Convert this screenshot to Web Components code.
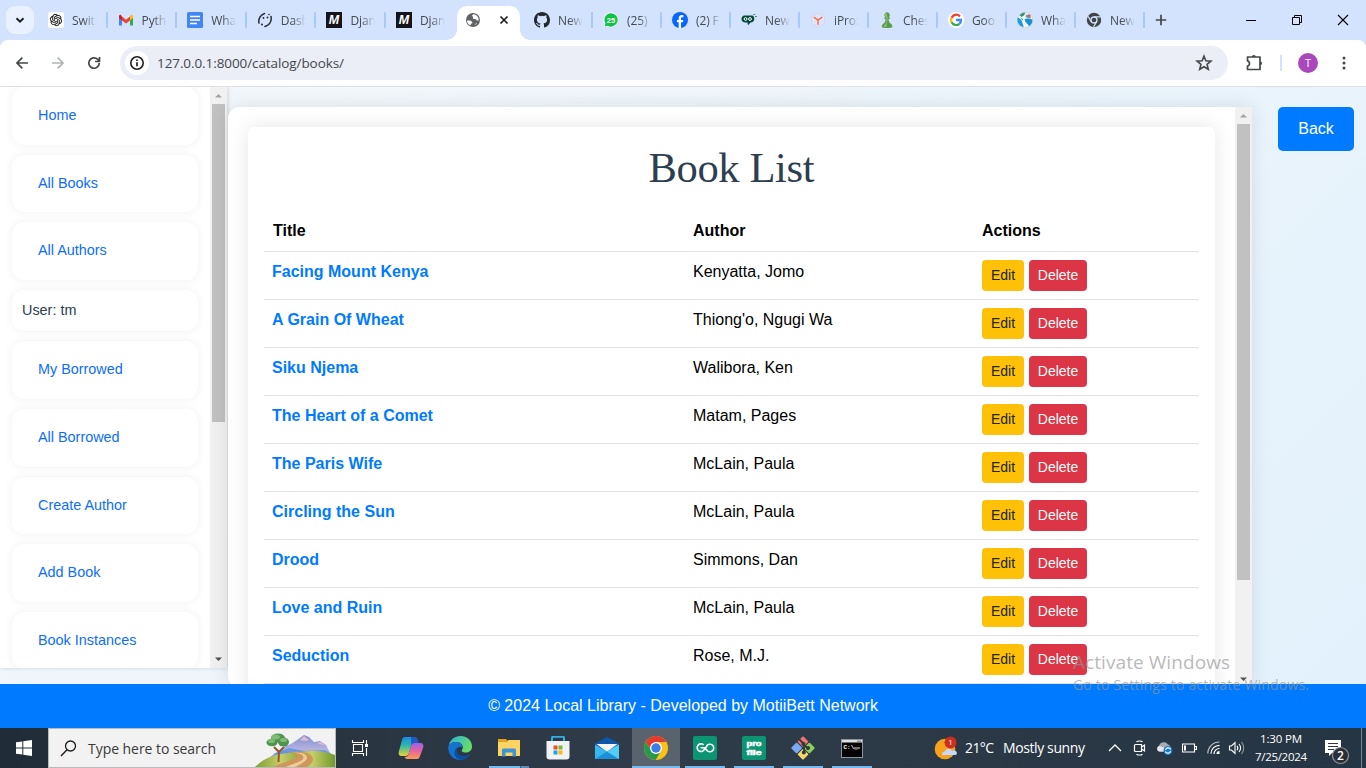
<!DOCTYPE html>
<html lang="en">
<head>
<meta charset="utf-8">
<title>Book List</title>
<style>
html,body{margin:0;padding:0;width:1366px;height:768px;overflow:hidden;font-family:"Liberation Sans",Arial,sans-serif}
</style>
</head>
<body>
<desktop-screen></desktop-screen>
<script>
const UI = '"Open Sans","Noto Sans",sans-serif';
function define(name, html, after) {
  const t = document.createElement('template');
  t.innerHTML = html;
  customElements.define(name, class extends HTMLElement {
    connectedCallback() {
      if (this.shadowRoot) return;
      this.attachShadow({mode: 'open'});
      if (after && after.before) after.before(this, t);
      this.shadowRoot.append(t.content.cloneNode(true));
    }
  });
}

/* Icon set: [width, height, markup] */
const ICONS = {
  chevdown: [16,16,'<path d="M4.5 6.2 8 9.7l3.5-3.5" fill="none" stroke="#1f1f1f" stroke-width="2"/>'],
  gpt: [16,16,'<rect width="16" height="16" rx="2.5" fill="#fff"/><g transform="translate(2 2) scale(.5)"><path fill="#111" stroke="#111" stroke-width=".3" d="M22.2819 9.8211a5.9847 5.9847 0 0 0-.5157-4.9108 6.0462 6.0462 0 0 0-6.5098-2.9A6.0651 6.0651 0 0 0 4.9807 4.1818a5.9847 5.9847 0 0 0-3.9977 2.9 6.0462 6.0462 0 0 0 .7427 7.0966 5.98 5.98 0 0 0 .511 4.9107 6.051 6.051 0 0 0 6.5146 2.9001A5.9847 5.9847 0 0 0 13.2599 24a6.0557 6.0557 0 0 0 5.7718-4.2058 5.9894 5.9894 0 0 0 3.9977-2.9001 6.0557 6.0557 0 0 0-.7475-7.0729zm-9.022 12.6081a4.4755 4.4755 0 0 1-2.8764-1.0408l.1419-.0804 4.7783-2.7582a.7948.7948 0 0 0 .3927-.6813v-6.7369l2.02 1.1686a.071.071 0 0 1 .038.052v5.5826a4.504 4.504 0 0 1-4.4945 4.4944zm-9.6607-4.1254a4.4708 4.4708 0 0 1-.5346-3.0137l.142.0852 4.783 2.7582a.7712.7712 0 0 0 .7806 0l5.8428-3.3685v2.3324a.0804.0804 0 0 1-.0332.0615L9.74 19.9502a4.4992 4.4992 0 0 1-6.1408-1.6464zM2.3408 7.8956a4.485 4.485 0 0 1 2.3655-1.9728V11.6a.7664.7664 0 0 0 .3879.6765l5.8144 3.3543-2.0201 1.1685a.0757.0757 0 0 1-.071 0l-4.8303-2.7865A4.504 4.504 0 0 1 2.3408 7.872zm16.5963 3.8558L13.1038 8.364 15.1192 7.2a.0757.0757 0 0 1 .071 0l4.8303 2.7913a4.4944 4.4944 0 0 1-.6765 8.1042v-5.6772a.79.79 0 0 0-.407-.667zm2.0107-3.0231l-.142-.0852-4.7735-2.7818a.7759.7759 0 0 0-.7854 0L9.409 9.2297V6.8974a.0662.0662 0 0 1 .0284-.0615l4.8303-2.7866a4.4992 4.4992 0 0 1 6.6802 4.66zM8.3065 12.863l-2.02-1.1638a.0804.0804 0 0 1-.038-.0567V6.0742a4.4992 4.4992 0 0 1 7.3757-3.4537l-.142.0805L8.704 5.459a.7948.7948 0 0 0-.3927.6813zm1.0976-2.3654l2.602-1.4998 2.6069 1.4998v2.9994l-2.5974 1.4997-2.6067-1.4997Z"/></g>'],
  gmail: [16,16,'<path d="M1 4v9.5h3V7z" fill="#4285f4"/><path d="M12 7v6.5h3V4z" fill="#34a853"/><path d="M1 4.3v1.8L4 8.4V4.6L2.9 3C2 2.4 1 3.200 1 4.300z" fill="#c5221f"/><path d="M4 4.600v3.800l4 3 4-3V4.600L8 7.700z" fill="#ea4335"/><path d="M12 4.600v3.800l3-2.300V4.300c0-1.200-1.200-2-2.100-1.300z" fill="#fbbc04"/>'],
  docs: [16,16,'<rect width="16" height="16" rx="1.500" fill="#4285f4"/><path d="M3 4.500h10M3 8h10M3 11.500h7" stroke="#fff" stroke-width="1.600"/>'],
  dash: [16,16,'<g fill="none" stroke="#2b2b33" stroke-width="1.500" stroke-linecap="round"><path d="M2 11c-1-4.500 2-8.500 5.500-9.500M14 4.500c1 5-2 8.500-6 10"/></g><g fill="#2b2b33"><circle cx="6.500" cy="6" r=".9"/><circle cx="10.500" cy="5.500" r=".9"/><circle cx="5" cy="12.500" r="1"/><circle cx="12" cy="2.500" r=".8"/></g>'],
  mdn: [16,16,'<rect width="16" height="16" fill="#15141a"/><text x="8" y="12.300" text-anchor="middle" font-family="Liberation Sans" font-style="italic" font-weight="bold" font-size="12.500" fill="#fff">M</text>'],
  globe: [16,16,'<circle cx="8" cy="8" r="7" fill="#5f6368"/><path d="M2 8.500c2.500-.3 4 .2 5 1.200s.2 1.800-.7 1.900 0 1.800-1.300 1.700C3 12 2 10.500 2 8.500zM8.500 2.200c-1.500.8-2 1.800-.8 2.300 1 .4-.5 1.500.5 2.200 1.800.8 3 .2 3.300 1.600l2.100.4c.6-3-1.600-6-5.100-6.500zM11.800 10.500l-2.300 2.600 2-1z" fill="#fff"/>'],
  close: [16,16,'<path d="m4.500 4.500 7 7m0-7-7 7" stroke="#1f1f1f" stroke-width="1.700"/>'],
  github: [16,16,'<path fill="#24292f" d="M8 0C3.580 0 0 3.580 0 8c0 3.540 2.290 6.530 5.470 7.590.4.070.55-.17.55-.38 0-.19-.01-.82-.01-1.490-2.010.37-2.530-.49-2.690-.94-.09-.23-.48-.94-.82-1.130-.28-.15-.68-.52-.01-.53.63-.01 1.080.58 1.230.82.72 1.210 1.870.87 2.330.66.070-.52.28-.87.51-1.070-1.780-.2-3.640-.89-3.640-3.950 0-.87.31-1.590.82-2.150-.08-.2-.36-1.020.08-2.120 0 0 .67-.21 2.200.82a7.600 7.600 0 0 1 4 0c1.530-1.040 2.200-.82 2.200-.82.44 1.100.16 1.920.08 2.120.51.56.82 1.270.82 2.150 0 3.070-1.870 3.750-3.650 3.950.29.25.54.73.54 1.480 0 1.070-.01 1.930-.01 2.200 0 .21.15.46.55.38A8.010 8.010 0 0 0 16 8c0-4.420-3.580-8-8-8z"/>'],
  whatsapp: [16,16,'<path d="M8 .3a7.500 7.500 0 1 1-3.600 14.300L.4 15.600l1.200-3.900A7.500 7.500 0 0 1 8 .3z" fill="#fff"/><path d="M8 1.200a6.700 6.700 0 1 1-3.400 12.500L1.600 14.600l.9-3.100A6.700 6.700 0 0 1 8 1.200z" fill="#12c143"/><text x="8" y="10.700" text-anchor="middle" font-family="Liberation Sans" font-weight="bold" font-size="7.500" fill="#fff">25</text>'],
  facebook: [16,16,'<circle cx="8" cy="8" r="8" fill="#0866ff"/><path d="M6.700 15.900V10.300H4.900V7.900h1.800V6.500c0-2.300 1-3.500 3.200-3.500.5 0 1.100.1 1.500.2v2.100h-.9c-1.100 0-1.500.4-1.500 1.500v1.100h2.300l-.4 2.400H9v5.600z" fill="#fff"/>'],
  quill: [16,16,'<path d="M3 3.500h8.500c1.200.6 1.800 1.800 1.800 3.200 0 2.300-1.500 3.800-3.800 3.900L7 13.200l-.6-2.600H4.500C2 10.500.5 9 .5 7c0-1.600 1-3 2.500-3.500z" fill="#04493a"/><circle cx="4.600" cy="7" r="1.400" fill="none" stroke="#fff" stroke-width="1"/><circle cx="9" cy="7" r="1.400" fill="none" stroke="#fff" stroke-width="1"/><path d="M12.500 2.500h1.800M14 4.500h2" stroke="#4b8375" stroke-width="1"/>'],
  ipro: [16,16,'<path d="m8 .8 6.500 3.700v7.200L8 15.300l-6.500-3.600V4.500z" fill="#dfe5f8" stroke="#cfd3ec" stroke-width=".8"/><path d="m3.800 5.200 4.200 3 4.200-3M8 8.200v4.600" fill="none" stroke="#fb6a4f" stroke-width="1.500"/>'],
  chess: [16,16,'<path d="M8 .3a2.900 2.900 0 0 1 1.900 5l1.700 1.200-2 .5c.1 2.500.7 3.700 2.600 5 1 .8 1.200 1.800 1.200 3.300-2.500 1-8.100 1-10.600 0 0-1.500.2-2.500 1.200-3.300 1.900-1.300 2.500-2.500 2.600-5l-2-.5 1.700-1.200A2.900 2.900 0 0 1 8 .3z" fill="#5d9948"/><path d="M7.500 1a2 2 0 0 0-.9 3.600L7.600 7l-.3 4-3 3.500c1 .4 2 .5 3 .6L8.600 8l-.1-3z" fill="#8ac36a"/>'],
  google: [16,16,'<circle cx="8" cy="8" r="8" fill="#fff"/><g fill="none" stroke-width="2.300"><path d="M12 4.400A5 5 0 0 0 3.600 5.800" stroke="#ea4335"/><path d="M3.600 5.700a5 5 0 0 0 0 4.700" stroke="#fbbc05"/><path d="M3.600 10.300a5 5 0 0 0 7.800 1.500" stroke="#34a853"/><path d="M8 8h5a5 5 0 0 1-1.700 3.900" stroke="#4285f4"/></g>'],
  world: [16,16,'<circle cx="8" cy="8" r="7.800" fill="#f2f7f5" stroke="#a9c3b4" stroke-width=".5"/><path d="M.8 5.500C2 6 4.500 7.500 5 9.500S6.500 13 6.500 15.200A7.500 7.500 0 0 1 .8 5.500z" fill="#1d9bd6"/><path d="M2.500 3.200C4.500 1 6.500.6 8.500.8L7 3.500 4.500 5z" fill="#3a8f7a"/><path d="M7.500 7.500c2-1.500 4.500-1 7.800 0 .3 3-1 5.500-3.300 6.800-1-2.500-4-3.800-4.500-6.800z" fill="#1991cc"/><path d="M9 2.500c2 0 4.500 1.500 5.300 3.500L11 6.500 8.500 5z" fill="#79a4c9"/><path d="M3 5.500 6 7l-.5 1.500z" fill="#47a860"/><circle cx="12" cy="3.800" r="1.500" fill="#d8574f"/>'],
  chromegray: [16,16,'<circle cx="8" cy="8" r="7.200" fill="#414549"/><circle cx="8" cy="8" r="3" fill="#414549" stroke="#d3e3fd" stroke-width="1.300"/><path d="M8 4.900h6.500M5.300 9.600 2 4.200M10.700 9.600 7.500 15" stroke="#d3e3fd" stroke-width="1.200"/>'],
  plus: [16,16,'<path d="M8 2.800v10.400M2.800 8h10.400" stroke="#444746" stroke-width="1.700"/>'],
  min: [16,16,'<path d="M3 8.500h10" stroke="#000"/>'],
  restore: [16,16,'<path d="M3.500 5.500h7v7h-7zM5.500 5.500v-2h7v7h-2" fill="none" stroke="#000"/>'],
  winclose: [16,16,'<path d="m3 3 10 10M13 3 3 13" stroke="#000" stroke-width="1.100"/>'],
  back: [16,16,'<path d="M14 8H3M8.300 2.700 3 8l5.300 5.300" fill="none" stroke="#444746" stroke-width="1.700"/>'],
  fwd: [16,16,'<path d="M2 8h11M7.700 2.700 13 8l-5.300 5.300" fill="none" stroke="#b1b3b5" stroke-width="1.700"/>'],
  reload: [16,16,'<path d="M13.200 8A5.200 5.200 0 1 1 11.500 4.200L13.200 6M13.500 2v4.500H9" fill="none" stroke="#444746" stroke-width="1.700"/>'],
  info: [16,16,'<circle cx="8" cy="8" r="6.200" fill="none" stroke="#1f1f1f" stroke-width="1.600"/><path d="M8 7.300v4M8 4.500v1.600" stroke="#1f1f1f" stroke-width="1.700"/>'],
  star: [18,18,'<path d="m9 2.200 1.900 4.600 5 .4-3.800 3.200 1.200 4.900L9 12.700l-4.300 2.600 1.200-4.900-3.800-3.200 5-.4z" fill="none" stroke="#444746" stroke-width="1.600"/>'],
  ext: [18,18,'<path d="M2.500 3h12.500v12.500H2.500v-3.500c2.600-.4 2.600-4.600 0-5z" fill="none" stroke="#444746" stroke-width="1.700" stroke-linejoin="round"/><path d="M6.800 3a2 2 0 0 1 4 0zM15 7.300a2 2 0 0 1 0 4z" fill="#444746"/>'],
  dots: [16,16,'<g fill="#444746"><circle cx="8" cy="3" r="1.500"/><circle cx="8" cy="8" r="1.500"/><circle cx="8" cy="13" r="1.500"/></g>'],
  up: [17,17,'<path d="M5 10.500h7L8.500 7z" fill="#a3a3a3"/>'],
  down: [17,17,'<path d="M5 6.500h7L8.500 10z" fill="#505050"/>'],
  windows: [16,16,'<path d="M0 2.300 6.300 1.400v6.100H0zM7.300 1.300 16 0v7.500H7.300zM0 8.500h6.300v6.100L0 13.700zM7.300 8.500H16V16l-8.700-1.300z" fill="#fff"/>'],
  search: [17,17,'<circle cx="10.500" cy="6" r="5" fill="none" stroke="#1b1b1b" stroke-width="1.300"/><path d="m7 9.700-6 6.300" stroke="#1b1b1b" stroke-width="1.400"/>'],
  scene: [80,38,'<defs><linearGradient id="g" x2="1" y2="0"><stop stop-color="#7f9e35"/><stop offset=".5" stop-color="#c8ce68"/><stop offset="1" stop-color="#6f9a2c"/></linearGradient><linearGradient id="m" x2="0" y2="1"><stop stop-color="#7f8fd3"/><stop offset=".6" stop-color="#b9b2e0"/><stop offset="1" stop-color="#4287dd"/></linearGradient></defs><path d="M14 29 30 17l6-2 6-4 7-5 5 2 5 5 6-1 6 4 3 6 2 5v4z" fill="url(#m)"/><path d="m45 11 4-4 5 4-4 1zM62 14l4-1 4 4z" fill="#e0b9cf"/><path d="M18 25 34 19l16 3 20-1 8 5v4z" fill="#4a8fe6" opacity=".7"/><path d="M38 25c12-5 30-4 42 1v12H34z" fill="url(#g)"/><path d="M0 38C8 30 18 25 34 24s18 14 18 14z" fill="url(#g)"/><path d="M32 23c12-1 25 0 26 7 0 4-4 6-6 8H18c10-5 22-7 24-11 .4-3-6-3-10-4z" fill="#cf9659"/><path d="M38 24c8 0 12 3 10 6-2 3-12 5-17 8h9c6-3 12-6 12-9 0-5-7-6-14-5z" fill="#efcb98"/><path d="M23.500 33 24 23l-5-5M24 23l5-5" stroke="#99552b" stroke-width="2" fill="none"/><g fill="#4f9450"><ellipse cx="17" cy="13.500" rx="5.500" ry="3.800"/><ellipse cx="23" cy="9" rx="7" ry="4.500"/><ellipse cx="28.500" cy="13" rx="5.500" ry="4.500"/></g><g fill="#80bb77"><ellipse cx="20.500" cy="8" rx="4.500" ry="2.500"/><ellipse cx="16.500" cy="12" rx="3.500" ry="2"/><ellipse cx="28.500" cy="11" rx="3.500" ry="2"/></g>'],
  taskview: [18,18,'<path d="M2.500 5.500h9v7h-9zM1.500 1v2.500h11V1M1.500 17v-2.500h11V17M15.500 1v4M15.500 9v8" fill="none" stroke="#fff" stroke-width="1.100"/><rect x="14" y="5" width="3" height="3" fill="#fff"/>'],
  copilot: [26,26,'<defs><linearGradient id="l" x2="0" y2="1"><stop stop-color="#178be9"/><stop offset=".45" stop-color="#2eb8a6"/><stop offset="1" stop-color="#e8d13a"/></linearGradient><linearGradient id="r" x2="0" y2="1"><stop stop-color="#9b5ff0"/><stop offset=".5" stop-color="#e9639d"/><stop offset="1" stop-color="#fa9d55"/></linearGradient></defs><path d="M7 2h9c2 0 3 1 3.500 3l1 3h-4c-2 0-3 1-3.500 3l-2 7c-.6 2-1.600 3-3.600 3H4c-3 0-4-2-3-5L4 5c.6-2 1.400-3 3-3z" fill="url(#l)"/><path d="M19 24h-9c-2 0-3-.5-3.300-2 2.600 0 3.600-1.500 4.300-4l2-7c.6-2 1.600-3 3.600-3H22c3 0 4 2 3 5l-3 8c-.6 2-1.400 3-3 3z" fill="url(#r)"/><path d="M13 2h3c2 0 3 1 3.500 3l1 3h-4c-2 0-2.600.5-3.300 2z" fill="#2357c5"/>'],
  edge: [24,24,'<defs><linearGradient id="e" x2="1" y2=".5"><stop stop-color="#2ab1ea"/><stop offset="1" stop-color="#66dd66"/></linearGradient></defs><path d="M.5 10C2 3.500 7 0 12.500 0 19 0 24 4.500 24 10.500c0 4-3 6-6.500 6-3 0-4.500-1.200-3.500-2.500 2.500-4-1-8-5.500-8S1.500 8 .5 10z" fill="url(#e)"/><path d="M.3 10.500C2 6.800 6 5.500 9 6c3.500.5 5.500 3 5.700 5.500C12 9.500 8 11.500 8 15.500c0 5 4 8.500 9 7.500C8 26.500-.8 19.500.3 10.500z" fill="#1573cf"/><path d="M9.500 11.500C7 16 11 20 15.500 20c3 0 5-1 7-2.500-1.500 3.500-5.500 6.300-9.500 6.500-6.500-1-9-9.500-3.500-12.500z" fill="#0c4f9f"/>'],
  explorer: [22,20,'<path d="M0 1h8l2 2h12v4H0z" fill="#e3a21a"/><path d="M0 4h9l1.500-2H22v16H0z" fill="#fcd462"/><path d="M4 18.500V12c0-1 .7-1.500 1.500-1.500h11c.8 0 1.500.5 1.500 1.500v6.500h-3.500v-4h-7v4z" fill="#3d94da"/>'],
  store: [24,24,'<path d="M6 6V1.800C6 1 6.500.7 7 .7h10c.6 0 1 .3 1 1.100V6" fill="none" stroke="#2eb0e7" stroke-width="2"/><path d="M.5 5h23v15.500c0 2-1 3-3 3h-17c-2 0-3-1-3-3z" fill="#f1f2f3"/><path d="M7.500 9.500h4v4h-4z" fill="#e8532a"/><path d="M12.500 9.500h4v4h-4z" fill="#7cb82f"/><path d="M7.500 14.500h4v4h-4z" fill="#23a3e3"/><path d="M12.500 14.500h4v4h-4z" fill="#f9b81b"/>'],
  mail: [24,22,'<path d="M0 6.500 12 0l12 6.500v4H0z" fill="#0c59a9"/><path d="M1.500 7h21L12 15z" fill="#f4f4f4"/><path d="M0 7.500 12 14.500 24 7.500V22H0z" fill="#35b8f1"/><path d="M0 22 12 14.500 24 22z" fill="#1d8fd9"/><path d="M12 14.500 24 7.500V22z" fill="#54cdf7"/>'],
  chrome: [24,24,'<circle cx="12" cy="12" r="12" fill="#fbc116"/><path d="M1.600 6A12 12 0 0 1 22.400 6H12L6.500 13z" fill="#e33b2e"/><path d="M1.600 6a12 12 0 0 0 10 18L17 15l-9.500-.5z" fill="#249a4a"/><circle cx="12" cy="12" r="6" fill="#fff"/><circle cx="12" cy="12" r="4.700" fill="#3b7dec"/>'],
  go: [24,24,'<rect width="24" height="24" rx="2" fill="#0b9573"/><path d="M10.500 8.800a3.800 3.800 0 1 0 1 4.200v-1.200H7.500M11.500 13.500 14.500 9A3.800 3.800 0 1 1 14 14.500l-1.500-2" fill="none" stroke="#fff" stroke-width="1.600"/>'],
  profile: [24,24,'<rect width="24" height="24" rx="2" fill="#0b9573"/><g font-family="Liberation Sans" font-weight="bold" font-size="7.800" fill="#fff" stroke="#fff" stroke-width=".6"><text x="4.500" y="9.700" textLength="15" lengthAdjust="spacingAndGlyphs">pro</text><text x="4.500" y="18.700" textLength="15" lengthAdjust="spacingAndGlyphs">file</text></g>'],
  git: [24,24,'<g transform="rotate(45 12 12)"><rect x="3.500" y="3.500" width="8" height="8" rx="1" fill="#f07575"/><rect x="12.500" y="3.500" width="8" height="8" rx="1" fill="#8ad158"/><rect x="3.500" y="12.500" width="8" height="8" rx="1" fill="#79a9f3"/><rect x="12.500" y="12.500" width="8" height="8" rx="1" fill="#f8d96b"/></g><path d="m8 3 5 5v10M13 9l4.500 4" stroke="#33383d" stroke-width="1.800" fill="none"/><circle cx="12.500" cy="8" r="2" fill="#33383d"/><circle cx="12.800" cy="16.500" r="2" fill="#33383d"/><circle cx="17" cy="12" r="2" fill="#33383d"/>'],
  cmd: [22,19,'<rect x=".5" y=".5" width="21" height="18" fill="#050505" stroke="#8e969b"/><path d="M1 1h20v2.500H1z" fill="#dfe3e6"/><path d="M16 2.200h4" stroke="#69727c"/><text x="2.500" y="10" font-family="Liberation Mono" font-size="6" font-weight="bold" fill="#fff">C:\\_</text><path d="M13 9h6" stroke="#ddd"/>'],
  weather: [24,24,'<circle cx="11" cy="13" r="10.300" fill="#f6a21c"/><path d="M8 18.500a3 3 0 0 1 2.800-3 4 4 0 0 1 7.400-.5 2.800 2.800 0 0 1 4.300 3.500 1.800 1.800 0 0 1-1 .5h-12c-1 0-1.500 0-1.500-.5z" fill="#c4d9fa"/><circle cx="16.500" cy="6.500" r="6" fill="#cf2d20"/><text x="16.500" y="9.300" text-anchor="middle" font-family="Open Sans" font-size="8" fill="#fff">1</text>'],
  caret: [14,8,'<path d="m1 7 6-6 6 6" fill="none" stroke="#fff" stroke-width="1.300"/>'],
  meet: [14,16,'<path d="M2.500 4.500h6v7h-6c-.7 0-1-.4-1-1v-5c0-.6.3-1 1-1zM8.500 7l3-2v6l-3-2M3.500 1.800C5 .8 8 .8 9.500 1.800M3.500 14.200c1.500 1 4.500 1 6 0" fill="none" stroke="#fff" stroke-width="1.200"/>'],
  cloud: [17,14,'<path d="M3 10.500a3 3 0 0 1 0-5.500 5 5 0 0 1 9-1.500c2 .5 2.500 2 2.500 3.500L12 11z" fill="#a9adb1"/><path d="M3 10.500a3 3 0 0 1 0-5.500l5 1.500 2 4z" fill="#e7e8e9"/><circle cx="12" cy="9.500" r="4.500" fill="#1878c9"/><path d="M9.500 9a2.600 2.600 0 0 1 4.500-1.300v-1M14.500 10a2.600 2.600 0 0 1-4.500 1.300v1" fill="none" stroke="#fff" stroke-width="1.200"/>'],
  battery: [16,10,'<path d="M1.500 1h12v8h-12zM14 3.500h1.500v3H14" fill="none" stroke="#fff" stroke-width="1.100"/><path d="M3 2.500h2v5H3z" fill="#fff"/>'],
  wifi: [14,14,'<g fill="none" stroke="#fff" stroke-width="1.200"><path d="M.8 12.500C.8 6 6 1 12.500 1" opacity=".7"/><path d="M4 12.800c0-5 4-8.500 8.500-8.500"/><path d="M7 13c0-3 2.500-5.500 5.500-5.500"/></g><path d="M9.500 13a3 3 0 0 1 3-3v3z" fill="#fff"/>'],
  sound: [17,14,'<path d="M1.500 5h2l3.500-3.500v11L3.500 9h-2z" fill="none" stroke="#fff" stroke-width="1.100"/><path d="M9 4.800c1 1.300 1 3 0 4.400M11 3c2 2.500 2 5.500 0 8" fill="none" stroke="#fff" stroke-width="1.100"/><path d="M13.500 1c3 4 3 8 0 12" fill="none" stroke="#8f979e" stroke-width="1.100"/>'],
  notice: [26,26,'<path d="M1 1h16v13H8l-3 3v-3H1z" fill="#fff"/><path d="M4 4.500h10M4 7.500h10M4 10.500h6" stroke="#2b3947"/><circle cx="16.500" cy="16.500" r="8" fill="#2b2f33" stroke="#8d959c" stroke-width="1.200"/><text x="16.500" y="21" text-anchor="middle" font-family="Open Sans" font-weight="600" font-size="12" fill="#fff">2</text>']
};
customElements.define('ui-icon', class extends HTMLElement {
  connectedCallback() {
    if (this.shadowRoot) return;
    const [w, h, body] = ICONS[this.getAttribute('name')];
    this.attachShadow({mode: 'open'}).innerHTML =
      `<style>:host{display:block;flex:none;width:${w}px;height:${h}px}svg{display:block}</style><svg width="${w}" height="${h}" viewBox="0 0 ${w} ${h}">${body}</svg>`;
  }
});

/* A single line of text tracked to a given width (attribute w). */
customElements.define('fit-text', class extends HTMLElement {
  connectedCallback() {
    if (this.shadowRoot) return;
    const w = +this.getAttribute('w');
    this.attachShadow({mode: 'open'}).innerHTML =
      `<style>:host{display:block;flex:none;width:${w}px}span{display:inline-block;white-space:nowrap}</style><span><slot></slot></span>`;
    const s = this.shadowRoot.querySelector('span');
    const n = this.textContent.length;
    const d = (w - s.getBoundingClientRect().width) / Math.max(1, n - 1);
    s.style.letterSpacing = d.toFixed(3) + 'px';
  }
});

/* ---------- browser chrome ---------- */
define('browser-tab', `<style>
:host{display:flex;align-items:center;height:40px;flex:none;width:var(--tab,69px);font:12px ${UI};color:#45494e}
ui-icon{margin:0 8px 0 10px}
.t{width:25px;overflow:hidden;white-space:nowrap;line-height:18px;padding-top:1px;-webkit-mask:linear-gradient(90deg,#000 45%,transparent);mask:linear-gradient(90deg,#000 45%,transparent);letter-spacing:-.1px}
i{width:2px;height:16px;background:#a8c7fa;margin-left:auto;border-radius:1px}
</style><ui-icon></ui-icon><div class="t"><slot></slot></div><i></i>`, {before(host, t) {
  t.content.querySelector('ui-icon').setAttribute('name', host.getAttribute('icon'));
  t.content.querySelector('i').style.visibility = host.hasAttribute('last') ? 'hidden' : '';
}});

define('tab-strip', `<style>
:host{display:flex;height:40px;background:#d3e3fd;align-items:center}
.s{width:28px;height:28px;margin:0 4px 0 6px;border-radius:9px;background:#eaf1fe;display:grid;place-items:center}
.l{display:flex;--tab:69.600px}
.a{position:relative;margin:6px 4px 0 1.400px;width:63px;height:34px;background:#fff;border-radius:10px 10px 0 0;display:flex;align-items:center;flex:none}
.a:before,.a:after{content:"";position:absolute;bottom:0;width:10px;height:10px}
.a:before{left:-10px;background:radial-gradient(circle at 0 0,transparent 9.500px,#fff 10px)}
.a:after{right:-10px;background:radial-gradient(circle at 100% 0,transparent 9.500px,#fff 10px)}
.a ui-icon:first-child{margin:-6px 15px 0 8px}.a ui-icon:last-child{margin-top:-6px}
.r{display:flex;position:relative}
.p{margin-left:8px}
.w{margin-left:auto;display:flex;gap:30px;padding-right:15px}
</style>
<div class="s"><ui-icon name="chevdown"></ui-icon></div>
<div class="l"><browser-tab icon="gpt">Swit:</browser-tab><browser-tab icon="gmail">Pyth</browser-tab><browser-tab icon="docs">Wha</browser-tab><browser-tab icon="dash">Dash</browser-tab><browser-tab icon="mdn">Djan</browser-tab><browser-tab icon="mdn" last>Djan</browser-tab></div>
<div class="a"><ui-icon name="globe"></ui-icon><ui-icon name="close"></ui-icon></div>
<div class="r"><browser-tab icon="github">New</browser-tab><browser-tab icon="whatsapp">(25)</browser-tab><browser-tab icon="facebook">(2) F</browser-tab><browser-tab icon="quill">New</browser-tab><browser-tab icon="ipro">iPro:</browser-tab><browser-tab icon="chess">Ches</browser-tab><browser-tab icon="google">Goo</browser-tab><browser-tab icon="world">Wha</browser-tab><browser-tab icon="chromegray">New</browser-tab></div>
<ui-icon class="p" name="plus"></ui-icon>
<div class="w"><ui-icon name="min"></ui-icon><ui-icon name="restore"></ui-icon><ui-icon name="winclose"></ui-icon></div>`);

define('address-bar', `<style>
:host{display:block;height:46px;background:#d3e3fd;border-bottom:1px solid #dfe1e3}
.bar{height:46px;background:#fff;border-radius:8px 8px 0 0;display:flex;align-items:center;box-sizing:border-box;padding-left:14px}
.bar>ui-icon{margin-right:20px}
.bar>ui-icon:last-child{margin-right:0}
.o{width:1108px;flex:none;height:34px;border-radius:17px;background:#ebeef7;display:flex;align-items:center;box-sizing:border-box;padding:0 15px 0 5px;margin-left:-2px}
.c{width:24px;height:24px;border-radius:50%;background:#fff;display:grid;place-items:center;margin-right:8px}
.o fit-text{font:13.500px/20px ${UI};color:#44474b}
.o>ui-icon{margin-left:auto}
.bar>ui-icon.e{margin:0 17px 0 17px}
i{width:2px;height:16px;background:#d3e3fd;flex:none}
b{width:20px;height:20px;border-radius:50%;background:#ab47bc;color:#fff;font:11px/20px ${UI};text-align:center;margin:0 18px 0 16px;flex:none}
</style><div class="bar"><ui-icon name="back"></ui-icon><ui-icon name="fwd"></ui-icon><ui-icon name="reload"></ui-icon>
<div class="o"><div class="c"><ui-icon name="info"></ui-icon></div><fit-text w="187">127.0.0.1:8000/catalog/books/</fit-text><ui-icon name="star"></ui-icon></div>
<ui-icon class="e" name="ext"></ui-icon><i></i><b>T</b><ui-icon name="dots"></ui-icon></div>`);

/* ---------- web page ---------- */
define('scroll-bar', `<style>
:host{display:flex;flex-direction:column;width:17px;flex:none;background:#f1f1f1}
div{background:#c1c1c1;margin:0 2px;height:var(--thumb)}
ui-icon:last-child{margin-top:auto}
</style><ui-icon name="up"></ui-icon><div></div><ui-icon name="down"></ui-icon>`);

define('side-link', `<style>
:host{display:block;box-sizing:border-box;flex:none;height:57.600px;padding:0 26px;background:#fff;border-radius:12px;box-shadow:0 0 10px rgba(0,0,0,.06);font-size:14.400px;line-height:57px;color:#0d6efd}
:host([plain]){height:41.600px;line-height:41px;padding:0 10px;color:#2c3e50}
</style><slot></slot>`);

define('side-nav', `<style>
:host{display:flex;width:227px;height:581px;flex:none;background:#fff;overflow:hidden}
nav{flex:1;display:flex;flex-direction:column;gap:10px;padding:0 12px;overflow:hidden}
scroll-bar{--thumb:318px;height:581px}
</style><nav><side-link>Home</side-link><side-link>All Books</side-link><side-link>All Authors</side-link><side-link plain>User: tm</side-link><side-link>My Borrowed</side-link><side-link>All Borrowed</side-link><side-link>Create Author</side-link><side-link>Add Book</side-link><side-link>Book Instances</side-link></nav><scroll-bar></scroll-bar>`);

define('book-row', `<style>
:host{display:grid;grid-template-columns:421px 289px 1fr;box-sizing:border-box;height:48px;padding:8px 8px 0;border-bottom:1px solid #dee2e6;font-size:16px;line-height:23px;color:#000}
::slotted([slot=title]){font-weight:bold;color:#007bff}
.b{display:flex;gap:5px}
button{all:unset;box-sizing:border-box;height:31px;border-radius:4px;font-size:14px;line-height:31px;text-align:center}
.e{width:42px;background:#ffc107;color:#212529}.d{width:58px;background:#dc3545;color:#fff}
</style><slot name="title"></slot><slot name="author"></slot><div class="b"><button class="e">Edit</button><button class="d">Delete</button></div>`);

const BOOKS = [['Facing Mount Kenya','Kenyatta, Jomo'],["A Grain Of Wheat","Thiong'o, Ngugi Wa"],['Siku Njema','Walibora, Ken'],['The Heart of a Comet','Matam, Pages'],['The Paris Wife','McLain, Paula'],['Circling the Sun','McLain, Paula'],['Drood','Simmons, Dan'],['Love and Ruin','McLain, Paula'],['Seduction','Rose, M.J.']];

define('book-list', `<style>
:host{display:block;box-sizing:border-box;width:967px;height:700px;background:#fff;border-radius:6px;box-shadow:0 0 20px rgba(0,0,0,.1);padding:0 16px}
h1{margin:0;height:83px;padding-top:16px;box-sizing:border-box;display:flex;justify-content:center;font:400 42.500px/50px "Liberation Serif",serif;color:#2c3e50}
.h{display:grid;grid-template-columns:421px 289px 1fr;box-sizing:border-box;height:42px;padding:0 8px;font-weight:bold;font-size:16px;line-height:41px;border-bottom:1px solid #dee2e6;color:#000}
.h span:first-child{padding-left:1px}
</style><h1><fit-text w="166">Book List</fit-text></h1>
<div class="h"><span>Title</span><span>Author</span><span>Actions</span></div>
${BOOKS.map(([t, a]) => `<book-row><span slot="title">${t}</span><span slot="author">${a}</span></book-row>`).join('')}`);

define('library-page', `<style>
:host{display:flex;flex-direction:column;height:641px;overflow:hidden;background:linear-gradient(135deg,#f5f8fb,#e2f1fc)}
.row{display:flex;height:597px;overflow:hidden;align-items:flex-start}
side-nav{box-shadow:1px 0 4px rgba(0,0,0,.15)}
main{position:relative;display:flex;width:1024px;height:581px;margin:20px 0 0 1px;flex:none;border-radius:12px 0 0 12px;box-shadow:0 0 20px rgba(0,0,0,.1)}
.in{display:flex;width:1024px;height:581px;background:#fff;border-radius:inherit;overflow:hidden}
.pad{flex:1;padding:20px;height:560px}
scroll-bar{--thumb:456px;height:581px}
a{margin:20px 0 0 26px;width:76px;height:44px;border-radius:5px;background:#007bff;color:#fff;font-size:16px;line-height:43px;text-align:center}
footer{height:44px;background:#007bff;color:#fff;font-size:16px;line-height:43px;text-align:center;position:relative}
</style><div class="row"><side-nav></side-nav><main><div class="in"><div class="pad"><book-list></book-list></div><scroll-bar></scroll-bar></div></main><a>Back</a></div>
<footer>© 2024 Local Library - Developed by MotiiBett Network</footer>`);

/* ---------- taskbar ---------- */
define('task-app', `<style>
:host{display:grid;place-items:center;width:48px;height:40px;flex:none;position:relative;margin-right:1px}
:host([open]):after{content:"";position:absolute;left:4px;right:4px;bottom:0;height:2px;background:#76b9ed}
:host([active]){background:#59636e}:host([active]):after{left:0;right:0}
:host([multi]):after{background:linear-gradient(90deg,#76b9ed 31px,#3d5a74 31px,#3d5a74 32px,#5b8db8 32px)}
</style><slot></slot>`);

define('task-bar', `<style>
:host{display:flex;height:40px;align-items:center;background:linear-gradient(90deg,#202d38,#2f3b48 45%,#2b3947 70%,#263543);color:#fff;font-family:${UI}}
.st{width:48px;display:grid;place-items:center}
.se{width:288px;height:40px;box-sizing:border-box;background:#f2f2f2;border:1px solid #b8babc;display:flex;align-items:center;padding-left:11px;color:#3a3a3a}
.se fit-text{margin-left:11px;font-size:14px;line-height:20px;padding-top:1px}
.se ui-icon:last-child{margin-left:auto}
.apps{display:flex}
.tr{display:flex;align-items:center;margin-left:auto;height:40px}
.tr fit-text{font-size:14px;line-height:20px}
.ck fit-text{font-size:11.500px;line-height:18px}
.ck{width:52px;display:flex;flex-direction:column;align-items:center;margin:2px 18px 0 10px;height:38px}
.ln{width:1px;height:40px;background:#7b858e;margin:0 4px 0 10px}
</style><div class="st"><ui-icon name="windows"></ui-icon></div>
<div class="se"><ui-icon name="search"></ui-icon><fit-text w="128">Type here to search</fit-text><ui-icon name="scene"></ui-icon></div>
<div class="apps"><task-app><ui-icon name="taskview"></ui-icon></task-app><task-app style="margin-left:2px"><ui-icon name="copilot"></ui-icon></task-app><task-app><ui-icon name="edge"></ui-icon></task-app><task-app open multi><ui-icon name="explorer"></ui-icon></task-app><task-app><ui-icon name="store"></ui-icon></task-app><task-app><ui-icon name="mail"></ui-icon></task-app><task-app open active><ui-icon name="chrome"></ui-icon></task-app><task-app open><ui-icon name="go"></ui-icon></task-app><task-app open><ui-icon name="profile"></ui-icon></task-app><task-app open><ui-icon name="git"></ui-icon></task-app><task-app open><ui-icon name="cmd"></ui-icon></task-app></div>
<div class="tr"><ui-icon name="weather"></ui-icon><fit-text w="29" style="margin:0 9px 0 7px">21°C</fit-text><fit-text w="82">Mostly sunny</fit-text>
<ui-icon name="caret" style="margin:0 11px 0 23px"></ui-icon><ui-icon name="meet"></ui-icon><ui-icon name="cloud" style="margin:0 8px 0 9px"></ui-icon><ui-icon name="battery"></ui-icon><ui-icon name="wifi" style="margin:0 7px 0 10px"></ui-icon><ui-icon name="sound"></ui-icon>
<div class="ck"><fit-text w="42">1:30 PM</fit-text><fit-text w="52">7/25/2024</fit-text></div><ui-icon name="notice" style="margin:7px 1px 0 -1px"></ui-icon><div class="ln"></div></div>`);

define('activation-note', `<style>
:host{position:absolute;left:1073px;top:648px;font-family:${UI};color:rgba(150,150,150,.68);pointer-events:none}
.a{font-size:19px;line-height:28px}.b{font-size:14px;line-height:17px}
</style><fit-text class="a" w="157">Activate Windows</fit-text><fit-text class="b" w="236">Go to Settings to activate Windows.</fit-text>`);

define('desktop-screen', `<style>
:host{display:flex;flex-direction:column;width:1366px;height:768px;overflow:hidden;position:relative}
</style><tab-strip></tab-strip><address-bar></address-bar><library-page></library-page><task-bar></task-bar><activation-note></activation-note>`);
</script>
</body>
</html>
